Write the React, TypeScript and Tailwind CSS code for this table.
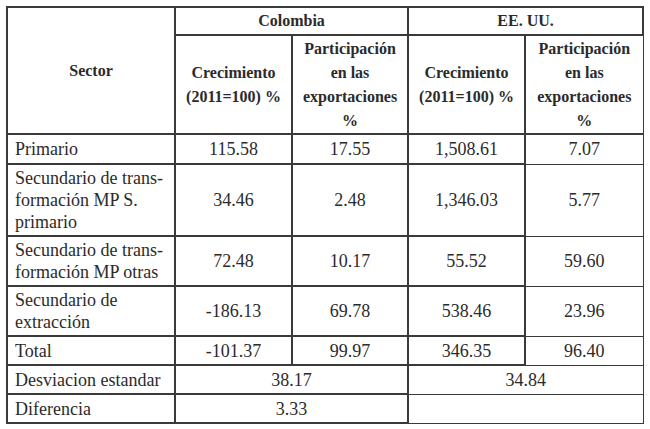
import React from 'react';

interface Row {
  sector: string[];
  values: string[];
  height: string;
}

const rows: Row[] = [
  { sector: ['Primario'], values: ['115.58', '17.55', '1,508.61', '7.07'], height: 'h-[30px]' },
  {
    sector: ['Secundario de trans-', 'formación MP S.', 'primario'],
    values: ['34.46', '2.48', '1,346.03', '5.77'],
    height: 'h-[72px]',
  },
  {
    sector: ['Secundario de trans-', 'formación MP otras'],
    values: ['72.48', '10.17', '55.52', '59.60'],
    height: 'h-[50px]',
  },
  {
    sector: ['Secundario de', 'extracción'],
    values: ['-186.13', '69.78', '538.46', '23.96'],
    height: 'h-[50px]',
  },
  { sector: ['Total'], values: ['-101.37', '99.97', '346.35', '96.40'], height: 'h-[29px]' },
];

const cell = 'border-2 border-[#3a3a3a] p-0';

export default function App() {
  return (
    <div className="w-[650px] h-[429px] bg-white pt-[6px] pl-[6px]">
      <table className="table-fixed border-collapse w-[636px] text-[18px] leading-[22px] text-[#2b2b2b] font-[family-name:Liberation_Serif,Times_New_Roman,serif]">
        <colgroup>
          <col className="w-[168px]" />
          <col className="w-[117px]" />
          <col className="w-[116px]" />
          <col className="w-[117px]" />
          <col className="w-[118px]" />
        </colgroup>
        <thead className="font-bold text-[16px] leading-[24px]">
          <tr className="h-[28px]">
            <th rowSpan={2} className={`${cell} text-center align-middle`}>
              Sector
            </th>
            <th colSpan={2} className={`${cell} text-center`}>
              Colombia
            </th>
            <th colSpan={2} className={`${cell} text-center`}>
              EE. UU.
            </th>
          </tr>
          <tr className="h-[99px]">
            <th className={`${cell} text-center`}>
              Crecimiento
              <br />
              (2011=100) %
            </th>
            <th className={`${cell} text-center`}>
              Participación
              <br />
              en las
              <br />
              exportaciones
              <br />
              %
            </th>
            <th className={`${cell} text-center`}>
              Crecimiento
              <br />
              (2011=100) %
            </th>
            <th className="border border-[#3a3a3a] border-t-2 border-b-2 text-center p-0">
              Participación
              <br />
              en las
              <br />
              exportaciones
              <br />
              %
            </th>
          </tr>
        </thead>
        <tbody>
          {rows.map((r) => (
            <tr key={r.values[0]} className={r.height}>
              <td className={`${cell} pl-[7px] text-left align-middle`}>
                {r.sector.map((s, i) => (
                  <div key={i}>{s}</div>
                ))}
              </td>
              {r.values.map((v, i) => (
                <td
                  key={i}
                  className={
                    i === 3
                      ? 'border border-[#3a3a3a] text-center align-middle p-0'
                      : `${cell} text-center align-middle`
                  }
                >
                  {v}
                </td>
              ))}
            </tr>
          ))}
          <tr className="h-[29px]">
            <td className={`${cell} pl-[7px]`}>Desviacion estandar</td>
            <td colSpan={2} className={`${cell} text-center`}>
              38.17
            </td>
            <td colSpan={2} className="border border-[#3a3a3a] border-l-2 text-center p-0">
              34.84
            </td>
          </tr>
          <tr className="h-[29px]">
            <td className={`${cell} pl-[7px]`}>Diferencia</td>
            <td colSpan={2} className={`${cell} text-center`}>
              3.33
            </td>
            <td colSpan={2} className="border border-[#3a3a3a] border-l-2 p-0"></td>
          </tr>
        </tbody>
      </table>
    </div>
  );
}
